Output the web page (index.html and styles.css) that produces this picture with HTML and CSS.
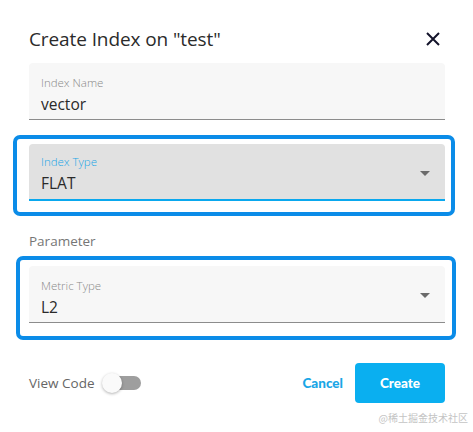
FILE: index.html
```html
<!DOCTYPE html>
<html>
<head>
<meta charset="utf-8">
<link rel="stylesheet" href="styles.css">
</head>
<body>
<div class="dialog">
  <div class="header">
    <h1 class="title">Create Index on "test"</h1>
    <button class="close" aria-label="close">
      <svg width="14" height="14" viewBox="0 0 14 14"><path d="M1 1L13 13M13 1L1 13" stroke="#14142b" stroke-width="2" fill="none"/></svg>
    </button>
  </div>
  <div class="field">
    <div class="label">Index Name</div>
    <div class="value">vector</div>
  </div>
  <div class="mark mark-a">
    <div class="field field-select field-active">
      <div class="label">Index Type</div>
      <div class="value">FLAT</div>
      <span class="caret"></span>
    </div>
  </div>
  <div class="section">Parameter</div>
  <div class="mark mark-b">
    <div class="field field-select">
      <div class="label">Metric Type</div>
      <div class="value">L2</div>
      <span class="caret"></span>
    </div>
  </div>
  <div class="footer">
    <div class="view-code">
      <span>View Code</span>
      <span class="switch"><span class="track"></span><span class="thumb"></span></span>
    </div>
    <div class="actions">
      <button class="btn-text">Cancel</button>
      <button class="btn-primary">Create</button>
    </div>
  </div>
  <div class="watermark">@稀土掘金技术社区</div>
</div>
</body>
</html>
```
FILE: styles.css
```css
* { box-sizing: border-box; }
html, body { margin: 0; padding: 0; background: #fff; }
body { width: 473px; height: 432px; overflow: hidden; font-family: Lato, "Open Sans", sans-serif; }
.dialog { padding: 22px 28px 0 29px; display: flex; flex-direction: column; }
.header { display: flex; justify-content: space-between; align-items: center; height: 34px; }
.title { margin: 0; font-family: "Open Sans", sans-serif; font-weight: 400; font-size: 19px; color: #2b2b2b; letter-spacing: -0.1px; }
.close { border: 0; background: none; padding: 0; margin-right: 5px; width: 14px; height: 14px; display: flex; }
.field { position: relative; margin-top: 7px; height: 57px; background: #f7f7f7; border-bottom: 1px solid #8c8c8c; border-radius: 4px 4px 0 0; padding: 13px 12px 0; }
.label { font-size: 11.5px; color: #8a8a8a; line-height: 14px; font-family: "Open Sans", sans-serif; font-weight: 300; }
.value { font-size: 15.5px; color: #2a2a2a; line-height: 20px; margin-top: 4px; font-family: "Open Sans", sans-serif; }
.field-active { background: #e1e1e1; border-bottom: 2px solid #0aa8ee; padding-top: 11px; }
.field-active .label { color: #1aa6e6; }
.caret { position: absolute; right: 15px; top: 27px; width: 0; height: 0; border-left: 5px solid transparent; border-right: 5px solid transparent; border-top: 5px solid #6b6b6b; }
.mark { position: relative; }
.mark::before { content: ""; position: absolute; border: 4px solid #0b8ce8; border-radius: 7px; pointer-events: none; }
.mark-a { margin-top: 24px; }
.mark-a .field { margin-top: 0; }
.mark-a::before { top: -9px; left: -16px; right: -10px; bottom: -15px; }
.mark-b .field { margin-top: 0; }
.mark-b::before { top: -10px; left: -13px; right: -11px; bottom: -17px; }
.section { margin-top: 30px; margin-bottom: 15px; font-size: 13.5px; color: #767676; line-height: 20px; font-family: "Open Sans", sans-serif; }
.footer { margin-top: 40px; display: flex; justify-content: space-between; align-items: center; }
.view-code { display: flex; align-items: center; gap: 8px; font-size: 13.5px; color: #666; font-family: "Open Sans", sans-serif; }
.switch { position: relative; width: 39px; height: 20px; display: inline-block; }
.track { position: absolute; left: 6px; top: 3px; width: 33px; height: 14px; border-radius: 7px; background: #9e9e9e; }
.thumb { position: absolute; left: 0; top: 0; width: 20px; height: 20px; border-radius: 50%; background: #fafafa; box-shadow: 0 1px 3px rgba(0,0,0,0.3); }
.actions { display: flex; align-items: center; gap: 11px; }
.btn-text { border: 0; background: none; padding: 0 1px; font-family: Lato, sans-serif; font-weight: 900; font-size: 13.5px; color: #1aa6e6; }
.btn-primary { border: 0; width: 90px; height: 40px; border-radius: 4px; background: #0aaff0; color: #fff; font-family: Lato, sans-serif; font-weight: 900; font-size: 13.5px; }
.watermark { align-self: flex-end; margin-top: 7px; margin-right: -23px; font-family: "Noto Sans CJK SC", sans-serif; font-size: 10px; color: #c4c4c4; }
```
